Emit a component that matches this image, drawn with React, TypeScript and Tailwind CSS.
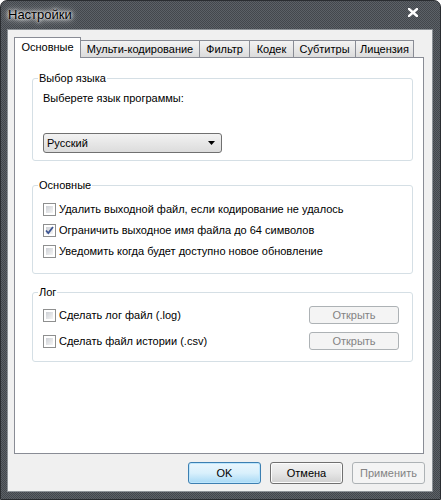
const tabs = [
  { label: "Основные", w: "w-[67px]", active: true },
  { label: "Мульти-кодирование", w: "w-[120px]" },
  { label: "Фильтр", w: "w-[51px]" },
  { label: "Кодек", w: "w-[45px]" },
  { label: "Субтитры", w: "w-[63px]" },
  { label: "Лицензия", w: "w-[59px]" },
];

function Checkbox({ checked = false }: { checked?: boolean }) {
  return (
    <span className="w-[13px] h-[13px] shrink-0 border border-[#8e8f8f] bg-white p-[2px] flex">
      <span className="relative flex-1 bg-gradient-to-br from-[#cdd0d5] to-[#f5f5f5]">
        {checked && (
          <svg
            className="absolute -left-[2px] -top-[2px]"
            width="11"
            height="11"
            viewBox="0 0 11 11"
          >
            <path
              d="M2 5.5 L4.3 8 L9 2"
              fill="none"
              stroke="#3d5592"
              strokeWidth="1.8"
            />
          </svg>
        )}
      </span>
    </span>
  );
}

function GroupBox({
  title,
  className,
  children,
}: {
  title: string;
  className: string;
  children: React.ReactNode;
}) {
  return (
    <fieldset
      className={`border border-[#d5dfe5] rounded-[3px] w-[381px] ml-[17px] ${className}`}
    >
      <legend className="ml-[5px] px-[1px] leading-[16px]">{title}</legend>
      <div className="pl-[10px]">{children}</div>
    </fieldset>
  );
}

function CheckRow({
  label,
  checked,
  h,
}: {
  label: string;
  checked?: boolean;
  h: string;
}) {
  return (
    <div className={`flex items-center gap-[3px] ${h}`}>
      <Checkbox checked={checked} />
      <span>{label}</span>
    </div>
  );
}

function OpenButton() {
  return (
    <button className="w-[90px] h-[18px] mr-[13px] border border-[#adb2b5] rounded-[3px] bg-[#f4f4f4] text-[#838383] leading-[16px]">
      Открыть
    </button>
  );
}

export default function App() {
  return (
    <div className="w-[441px] h-[500px] flex flex-col rounded-t-[7px] border border-[#2a2d31] bg-[repeating-conic-gradient(#5c6167_0%_25%,#43474c_0%_50%)] bg-[length:2px_2px] font-['Liberation_Sans',Arial,sans-serif] text-[11px] text-black">
      {/* Title bar */}
      <div className="h-[28px] flex items-center justify-between pl-[7px] pr-[22px]">
        <span className="text-[13px] leading-[20px] text-black [text-shadow:0_0_8px_#fff,0_0_5px_#fff,0_0_3px_#fff]">
          Настройки
        </span>
        <svg width="10" height="9" viewBox="0 0 10 9" className="mt-[-6px]">
          <path
            d="M1 1 L9 8 M9 1 L1 8"
            stroke="#fff"
            strokeWidth="2.4"
            strokeLinecap="square"
          />
        </svg>
      </div>

      {/* Client area */}
      <div className="flex-1 ml-[6px] mr-[7px] mb-[7px] bg-[#f0f0f0] border border-[#8d9297] px-[6px] pt-[6px] flex flex-col">
        {/* Tabs */}
        <div className="flex items-end h-[21px]">
          {tabs.map((t, i) => (
            <div
              key={t.label}
              className={`${t.w} ${i > 0 ? "-ml-px" : ""} whitespace-nowrap border border-b-0 border-[#898c95] flex items-center justify-center leading-[16px] ${
                t.active
                  ? "h-[21px] bg-white relative z-10 -mb-px pb-[3px]"
                  : "h-[17px] bg-gradient-to-b from-[#f3f3f3] to-[#dcdcdc]"
              }`}
            >
              {t.label}
            </div>
          ))}
        </div>

        {/* Tab page */}
        <div className="w-[410px] h-[397px] border border-[#898c95] bg-white flex flex-col">
          <GroupBox title="Выбор языка" className="mt-[12px] h-[91px]">
            <div className="mt-[4px] leading-[16px]">Выберете язык программы:</div>
            <div className="mt-[27px] w-[179px] h-[20px] border border-[#707070] rounded-[3px] bg-gradient-to-b from-[#f2f2f2] to-[#dcdcdc] flex items-center justify-between pl-[3px] pr-[6px]">
              <span className="leading-[16px]">Русский</span>
              <svg width="7" height="4" viewBox="0 0 7 4">
                <path d="M0 0 H7 L3.5 4 Z" fill="#000" />
              </svg>
            </div>
          </GroupBox>

          <GroupBox title="Основные" className="mt-[16px] h-[97px]">
            <div className="mt-[6px] flex flex-col">
              <CheckRow h="h-[21px]" label="Удалить выходной файл, если кодирование не удалось" />
              <CheckRow h="h-[21px]" checked label="Ограничить выходное имя файла до 64 символов" />
              <CheckRow h="h-[21px]" label="Уведомить когда будет доступно новое обновление" />
            </div>
          </GroupBox>

          <GroupBox title="Лог" className="mt-[10px] h-[78px]">
            <div className="mt-[2px] flex flex-col">
              <div className="flex items-center justify-between h-[26px]">
                <CheckRow h="h-[26px]" label="Сделать лог файл (.log)" />
                <OpenButton />
              </div>
              <div className="flex items-center justify-between h-[26px]">
                <CheckRow h="h-[26px]" label="Сделать файл истории (.csv)" />
                <OpenButton />
              </div>
            </div>
          </GroupBox>
        </div>

        {/* Dialog buttons */}
        <div className="flex justify-end gap-[9px] mt-[8px] mr-[1px]">
          <button className="w-[73px] h-[22px] border border-[#3c7fb1] rounded-[3px] bg-gradient-to-b from-[#eaf6fd] via-[#d9f0fc] to-[#a7d9f5] leading-[16px] shadow-[inset_0_0_0_1px_#bde6fd]">
            OK
          </button>
          <button className="w-[73px] h-[22px] border border-[#707070] rounded-[3px] bg-gradient-to-b from-[#f2f2f2] via-[#e6e6e6] to-[#d0d0d0] leading-[16px] shadow-[inset_0_0_0_1px_#fcfcfc]">
            Отмена
          </button>
          <button className="w-[73px] h-[22px] border border-[#adb2b5] rounded-[3px] bg-[#f4f4f4] text-[#838383] leading-[16px]">
            Применить
          </button>
        </div>
      </div>
    </div>
  );
}
